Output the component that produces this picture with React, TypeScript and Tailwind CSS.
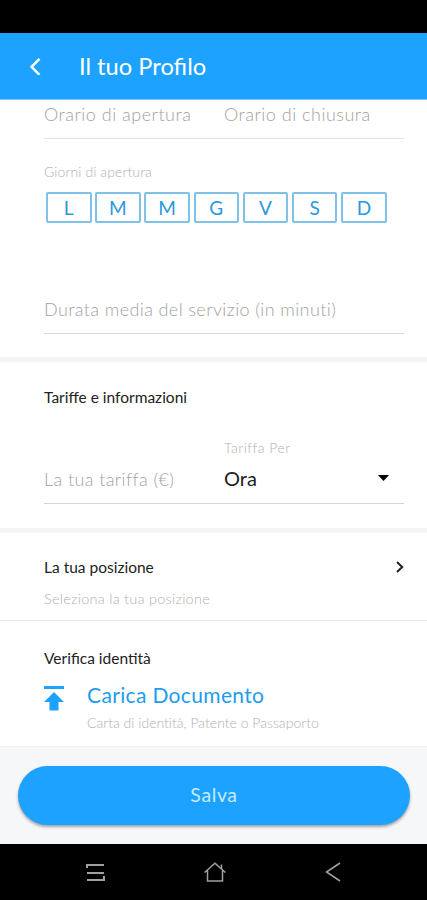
import type { ComponentProps, ReactNode } from "react";
import clsx from "clsx";

const days = ["L", "M", "M", "G", "V", "S", "D"];

export default function App() {
	return (
		<div className="flex h-[900px] w-full flex-col overflow-hidden bg-white font-['Lato',sans-serif] text-[#222]">
			<div className="h-[33px] shrink-0 bg-black" />
			<Header />
			<main className="flex flex-1 flex-col">
				<OpeningHours />
				<Rates />
				<Position />
				<Identity />
			</main>
			<footer className="h-[98px] shrink-0 border-t border-[#efefef] bg-[#f6f7f9] pl-[18px] pr-[17px] pt-[19px]">
				<button className="block h-[59px] w-full rounded-full bg-[#1ea2ff] pb-px text-[19.5px] font-normal tracking-[0.6px] text-[#c4eaff] shadow-[0_2px_3px_rgba(0,0,0,0.35)]">
					Salva
				</button>
			</footer>
			<NavBar />
		</div>
	);
}

function Header() {
	return (
		<header className="flex h-[67px] shrink-0 items-center border-b border-[#7cc6fb] bg-[#1ea2ff] pl-[29px] text-white">
			<svg width="13" height="18" viewBox="0 0 13 18" fill="none" stroke="currentColor" strokeWidth="2.5">
				<path d="M10.500 1.800 2.500 9.800l8 8" />
			</svg>
			<h1 className="pl-[37px] text-[23.7px] leading-7">Il tuo Profilo</h1>
		</header>
	);
}

function Placeholder({ className, ...props }: ComponentProps<"span">) {
	return (
		<span
			className={clsx("block whitespace-nowrap text-[18px] font-light leading-6 text-[#a2a2a2]", className)}
			{...props}
		/>
	);
}

function Caption({ children, className }: { children: ReactNode; className?: string }) {
	return (
		<span className={clsx("block whitespace-nowrap font-light leading-5 text-[#b0b0b0]", className)}>
			{children}
		</span>
	);
}

function Title({ children }: { children: ReactNode }) {
	return <h2 className="whitespace-nowrap text-[15.5px] leading-5">{children}</h2>;
}

function OpeningHours() {
	return (
		<section className="h-[262px] shrink-0 border-b-5 border-[#f4f4f4] pl-11 pr-[23px]">
			<div className="grid h-[39px] grid-cols-2 border-b border-[#e4e4e4] pt-[2px]">
				<Placeholder className="tracking-[0.5px]">Orario di apertura</Placeholder>
				<Placeholder className="tracking-[0.5px]">Orario di chiusura</Placeholder>
			</div>
			<Caption className="pt-[23px] text-[14px] tracking-[0.1px]">Giorni di apertura</Caption>
			<div className="flex gap-[3.7px] pl-[2px] pt-[10px]">
				{days.map((day, i) => (
					<div
						key={`${day}+${i}`}
						className="flex h-[31px] w-[45.5px] items-center justify-center rounded-[2px] border-2 border-[#7fc1e8] pt-px text-[19px] text-[#2a98dc]"
					>
						{day}
					</div>
				))}
			</div>
			<div className="mt-[74px] h-[37px] border-b border-[#dadada]">
				<Placeholder className="tracking-[0.4px]">Durata media del servizio (in minuti)</Placeholder>
			</div>
		</section>
	);
}

function Rates() {
	return (
		<section className="h-[171px] shrink-0 border-b-5 border-[#f4f4f4] pl-11 pr-[23px] pt-[25px]">
			<Title>Tariffe e informazioni</Title>
			<div className="mt-[31px] grid h-[66px] grid-cols-2 border-b border-[#d4d4d4]">
				<Placeholder className="pt-[29px] tracking-[0.4px]">La tua tariffa (€)</Placeholder>
				<div>
					<Caption className="text-[14px] tracking-[0.5px]">Tariffa Per</Caption>
					<div className="flex items-center justify-between pr-[15px] pt-[8px]">
						<span className="text-[20px] leading-6">Ora</span>
						<svg width="11" height="6" viewBox="0 0 11 6">
							<path d="M0 0h11L5.5 6z" fill="#000" />
						</svg>
					</div>
				</div>
			</div>
		</section>
	);
}

function Position() {
	return (
		<section className="h-[88px] shrink-0 border-b border-[#e6e6e6] pl-11 pr-[23px] pt-[24px]">
			<div className="flex items-center justify-between">
				<Title>La tua posizione</Title>
				<svg width="8" height="12" viewBox="0 0 8 12" fill="none" stroke="#222" strokeWidth="2">
					<path d="m1 1 5.2 5L1 11" />
				</svg>
			</div>
			<Caption className="pt-[12px] text-[14.5px] tracking-[0.25px]">Seleziona la tua posizione</Caption>
		</section>
	);
}

function Identity() {
	return (
		<section className="pl-11 pt-[27px]">
			<Title>Verifica identità</Title>
			<div className="flex pt-[14px]">
				<svg width="20" height="25" viewBox="0 0 20 25" fill="#1ea2ff" className="mt-[4px]">
					<path d="M0 0h20v3H0zM10 6l10 10h-5.500v8.500h-9V16H0z" />
				</svg>
				<div className="pl-[23px]">
					<div className="whitespace-nowrap text-[21px] leading-[26px] tracking-[0.35px] text-[#1e9cf0]">
						Carica Documento
					</div>
					<Caption className="pt-[5px] text-[14px] tracking-[0.01px]">
						Carta di identità, Patente o Passaporto
					</Caption>
				</div>
			</div>
		</section>
	);
}

function NavBar() {
	return (
		<nav className="flex h-14 shrink-0 items-center justify-between bg-black pl-[86px] pr-[86px] text-[#a0a0a0]">
			<svg width="19" height="19" viewBox="0 0 19 19" fill="none" stroke="currentColor" strokeWidth="2">
				<path d="M1 5V2h17M1 10h17M1 17h17v-4" />
			</svg>
			<svg width="22" height="20" viewBox="0 0 22 20" fill="none" stroke="currentColor" strokeWidth="1.500">
				<path d="M.6 10.500 11 1.200l10.400 9.300M3.500 8.500V19h15V8.500M17.500 7V2.500" />
			</svg>
			<svg width="16" height="20" viewBox="0 0 16 20" fill="none" stroke="currentColor" strokeWidth="1.600">
				<path d="M15 1 1.500 10 15 19" />
			</svg>
		</nav>
	);
}
